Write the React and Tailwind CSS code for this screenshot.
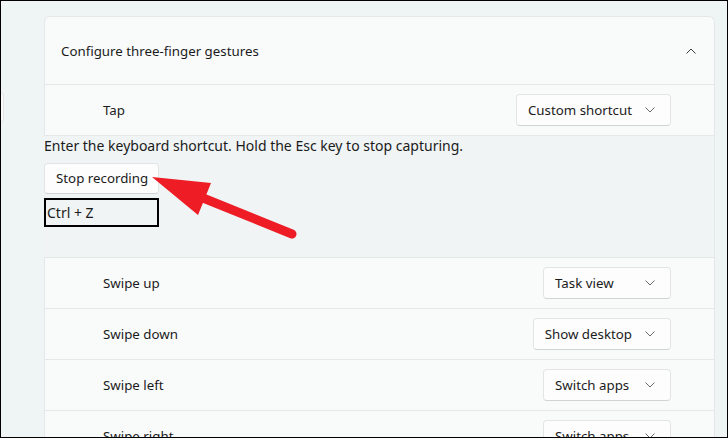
import React from 'react';

const Chevron = ({ up = false, className = '' }) => (
  <svg width="10" height="6" viewBox="0 0 10 6" className={className}>
    <path
      d={up ? 'M0.5 5.5 L5 1 L9.5 5.5' : 'M0.5 0.5 L5 5 L9.5 0.5'}
      fill="none"
      stroke="currentColor"
      strokeWidth="1"
    />
  </svg>
);

const Dropdown = ({ label }) => (
  <div className="flex h-[32px] min-w-[128px] items-center justify-between gap-[13px] rounded-[4px] border border-[#e3e5e5] border-b-[#d2d4d4] bg-[#fdfdfd] pl-[11px] pr-[15px]">
    <span className="pt-[2px] text-[13.3px] text-[#1b1b1b]">{label}</span>
    <Chevron className="text-[#6a6a6a]" />
  </div>
);

const GestureRow = ({ label, value }) => (
  <div className="flex h-[51px] items-center border-b border-[#e3e8e8] pl-[58px] pr-[43px]">
    <span className="flex-1 pt-[2px] text-[13.3px] text-[#1b1b1b]">{label}</span>
    <Dropdown label={value} />
  </div>
);

const App = () => {
  const rows = [
    { label: 'Swipe up', value: 'Task view' },
    { label: 'Swipe down', value: 'Show desktop' },
    { label: 'Swipe left', value: 'Switch apps' },
    { label: 'Swipe right', value: 'Switch apps' },
  ];

  return (
    <div
      className="relative h-[438px] w-[728px] overflow-hidden border border-black bg-[#eff4f4]"
      style={{ fontFamily: '"Noto Sans", sans-serif' }}
    >
      <div className="flex">
        {/* Left edge control, mostly cut off */}
        <div className="w-[43px] shrink-0">
          <div className="ml-[-8px] mt-[91px] h-[31px] w-[11px] rounded-[4px] border border-[#e3e5e5] bg-[#fbfbfb]" />
        </div>

        {/* Card */}
        <div className="mt-[15px] w-[671px] shrink-0 rounded-t-[6px] border border-b-0 border-[#e3e8e8] bg-[#f9fbfb]">
          <div className="flex h-[68px] items-center border-b border-[#e3e8e8] pl-[16px] pr-[18px]">
            <span className="flex-1 pt-[2px] text-[13.3px] text-[#1b1b1b]">Configure three-finger gestures</span>
            <Chevron up className="text-[#3b3b3b]" />
          </div>

          <GestureRow label="Tap" value="Custom shortcut" />

          {/* Shortcut recording */}
          <div className="ml-[-1px] h-[122px] border-b border-[#e3e8e8] bg-[#f0f4f4]">
            <p className="h-[20px] leading-[20px] text-[14px] text-[#1b1b1b]">
              Enter the keyboard shortcut. Hold the Esc key to stop capturing.
            </p>
            <button className="mt-[7px] flex h-[31px] w-[115px] items-center rounded-[4px] border border-[#e3e5e5] border-b-[#d2d4d4] bg-[#fdfdfd] pl-[11px] pt-[1px] text-[13.3px] text-[#1b1b1b]">
              Stop recording
            </button>
            <div className="mt-[4px] flex h-[29px] w-[115px] items-center border-2 border-black pl-[1px] text-[14px] text-[#1b1b1b]">
              Ctrl + Z
            </div>
          </div>

          {rows.map((row) => (
            <GestureRow key={row.label} label={row.label} value={row.value} />
          ))}
        </div>
      </div>

      {/* Red annotation arrow */}
      <svg className="pointer-events-none absolute left-[-1px] top-[-1px]" width="728" height="438">
        <line x1="203" y1="198" x2="292" y2="234" stroke="#ee1c25" strokeWidth="9" strokeLinecap="round" />
        <polygon points="152,177 211,183 198,215" fill="#ee1c25" />
      </svg>
    </div>
  );
};

export default App;
